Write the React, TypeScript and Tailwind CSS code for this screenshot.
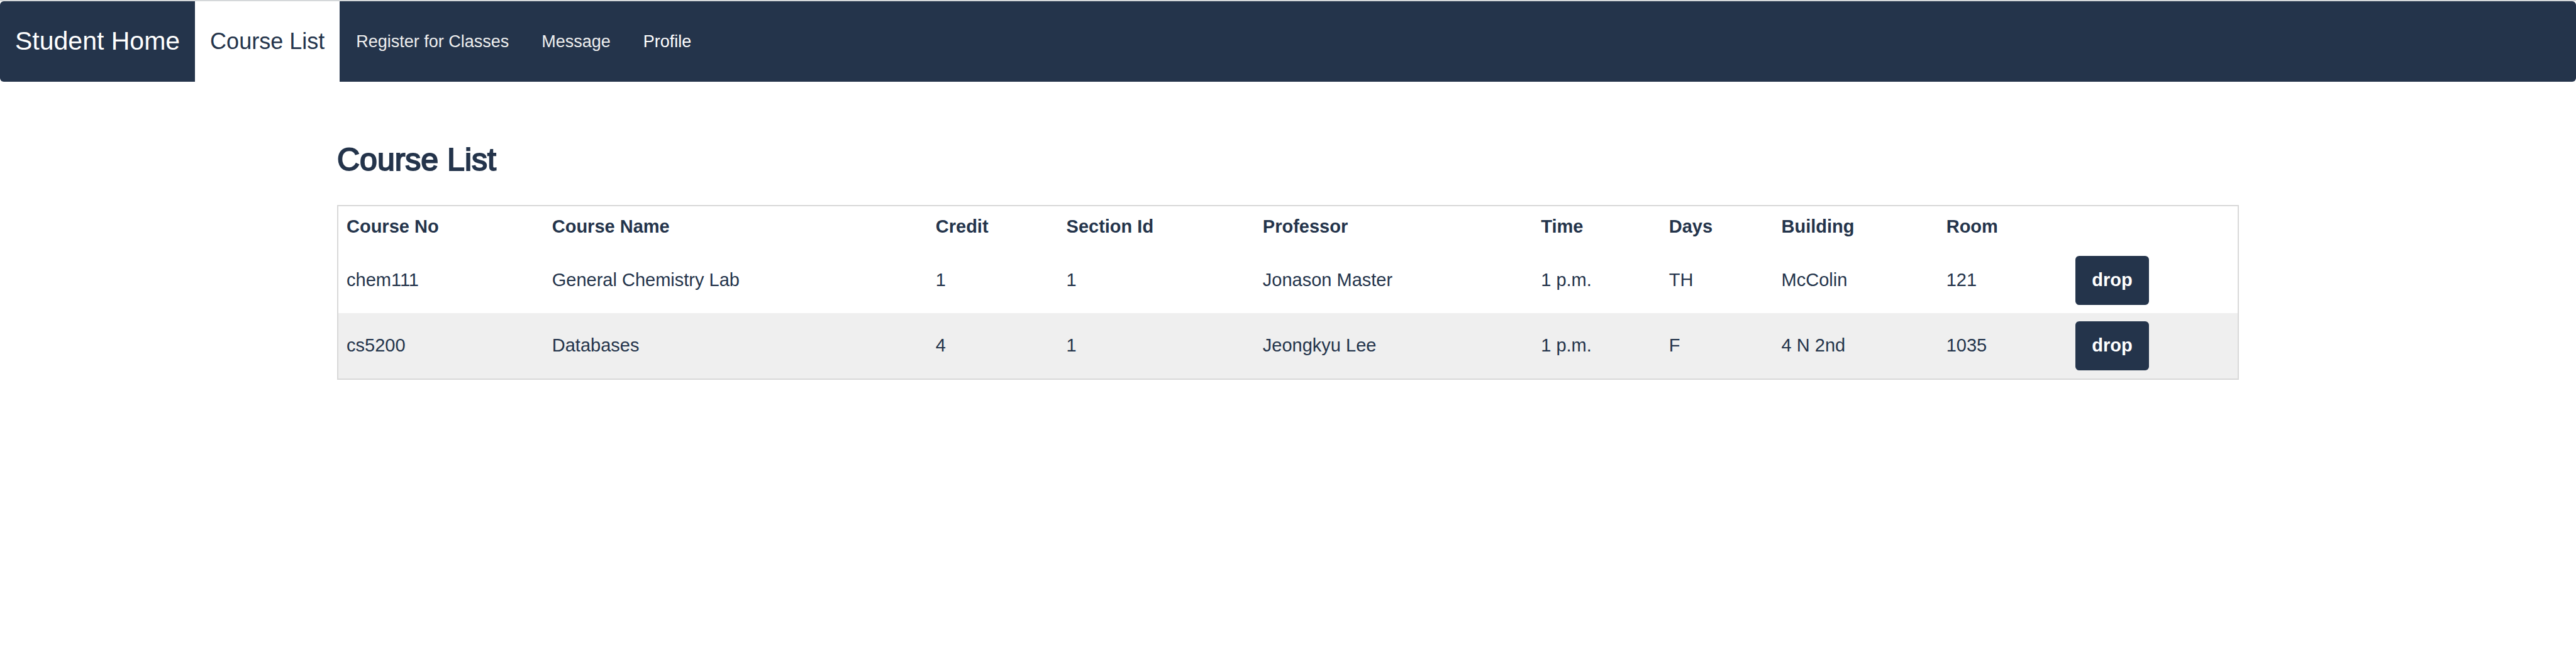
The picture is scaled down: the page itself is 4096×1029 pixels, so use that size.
const links = ["Register for Classes", "Message", "Profile"];

const columns = [
  { label: "Course No", width: "w-[10.82%]" },
  { label: "Course Name", width: "w-[20.2%]" },
  { label: "Credit", width: "w-[6.88%]" },
  { label: "Section Id", width: "w-[10.34%]" },
  { label: "Professor", width: "w-[14.65%]" },
  { label: "Time", width: "w-[6.74%]" },
  { label: "Days", width: "w-[5.92%]" },
  { label: "Building", width: "w-[8.68%]" },
  { label: "Room", width: "w-[6.81%]" },
];

const courses = [
  ["chem111", "General Chemistry Lab", "1", "1", "Jonason Master", "1 p.m.", "TH", "McColin", "121"],
  ["cs5200", "Databases", "4", "1", "Jeongkyu Lee", "1 p.m.", "F", "4 N 2nd", "1035"],
];

function NavBar() {
  return (
    <header className="border-t-2 border-[#d5d8da]">
      <nav className="flex h-32 items-stretch rounded-md bg-[#24344b] text-[27px] text-[#efefef]">
        <a href="#home" className="flex items-center px-6 text-[41px] text-white">
          Student Home
        </a>
        <a href="#courses" aria-current="page" className="flex items-center bg-white px-6 text-[36px] text-[#24344b]">
          Course List
        </a>
        {links.map((label) => (
          <a key={label} href="#" className="flex items-center px-[26px] last:text-white">
            {label}
          </a>
        ))}
      </nav>
    </header>
  );
}

export default function App() {
  return (
    <div className="min-h-screen bg-white font-['Liberation_Sans',Arial,sans-serif] text-[#24344b]">
      <NavBar />
      <main className="mx-auto w-3/4 px-6 pt-24">
        <h1 className="text-[50px] leading-[56px] [-webkit-text-stroke:2px_#24344b]">Course List</h1>
        <table className="mt-11 w-full table-fixed border-separate border-spacing-0 border-2 border-[#d8d8d8] text-left text-[29px]">
          <thead>
            <tr className="h-[66px]">
              {columns.map((c) => (
                <th key={c.label} scope="col" className={`px-[13px] py-0 font-bold ${c.width}`}>
                  {c.label}
                </th>
              ))}
              <td />
            </tr>
          </thead>
          <tbody>
            {courses.map((row) => (
              <tr key={row[0]} className="even:bg-[#efefef]">
                {row.map((cell, i) => (
                  <td key={i} className="px-[13px] py-0">
                    {cell}
                  </td>
                ))}
                <td className="p-[13px]">
                  <button
                    type="button"
                    aria-label={`drop ${row[0]}`}
                    className="block h-[78px] rounded-md bg-[#24344b] px-[26px] font-bold text-white"
                  >
                    drop
                  </button>
                </td>
              </tr>
            ))}
          </tbody>
        </table>
      </main>
    </div>
  );
}
